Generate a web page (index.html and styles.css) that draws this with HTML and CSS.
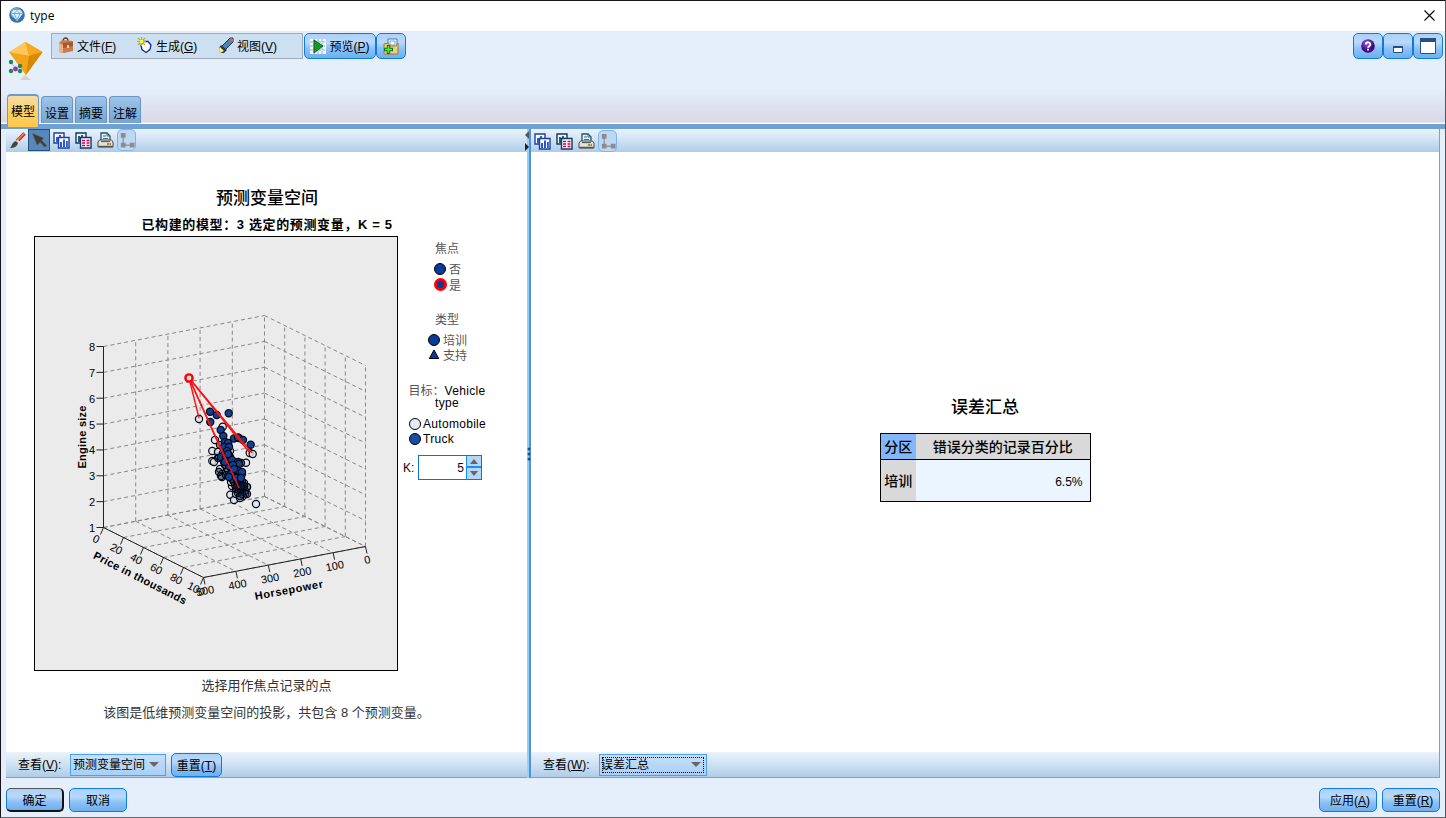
FILE: index.html
```html
<!DOCTYPE html>
<html lang="zh-CN">
<head>
<meta charset="utf-8">
<title>type</title>
<link rel="stylesheet" href="styles.css">
</head>
<body>
<svg class="defs" width="0" height="0" aria-hidden="true">
  <defs>
    <linearGradient id="gem" x1="0" x2="1"><stop offset="0" stop-color="#ffc94f"/><stop offset="1" stop-color="#e08c00"/></linearGradient>
    <radialGradient id="ball" cx=".4" cy=".3"><stop offset="0" stop-color="#9a5be0"/><stop offset="1" stop-color="#43067f"/></radialGradient>
    <symbol id="i-charts" viewBox="0 0 17 17">
      <path d="M1 1h10v10H1z" fill="#fff" stroke="#1c3f9f" stroke-width="1.4"/><path d="M3 5h2v5H3zM6 3h2v4H6z" fill="#2f5fd0"/>
      <path d="M5.500 5.500h10.500v10.500H5.500z" fill="#fff" stroke="#1c3f9f" stroke-width="1.400"/><path d="M7 10h2v5H7zM10 7.500h2V15h-2zM13 9h1.800v6H13z" fill="#2456cf"/>
    </symbol>
    <symbol id="i-table" viewBox="0 0 17 17">
      <path d="M1 1h10v10H1z" fill="#e7f7f3" stroke="#123769" stroke-width="1.400"/><path d="M3 4h2v6H3zM6 3h2v3H6z" fill="#23607d"/>
      <path d="M5.500 5.500h10.500v10.500H5.500z" fill="#fff" stroke="#123769" stroke-width="1.400"/><path d="M7 8.500h3m1.500 0h3M7 11h3m1.500 0h3M7 13.500h3m1.500 0h3" stroke="#d20045" stroke-width="1.300"/>
    </symbol>
    <symbol id="i-print" viewBox="0 0 17 17">
      <path d="M4 9V1h6l3 3v5z" fill="#dff4fb" stroke="#28515f" stroke-width="1.300"/><path d="M10 1v3h3M6 4h3M6 6.500h5" fill="none" stroke="#3c7384"/>
      <path d="M2.500 8h12l1.500 2v5H1v-5z" fill="#e8e2d4" stroke="#4f4c48"/><path d="M1.500 14.500h14" stroke="#555" stroke-width="1.500"/><path d="M4 9.500h9" stroke="#4b6770" stroke-width="1.300"/><path d="M10 12h2" stroke="#1fa03b" stroke-width="1.300"/><path d="M12.500 12h1.500" stroke="#e53324" stroke-width="1.300"/>
    </symbol>
    <symbol id="i-node" viewBox="0 0 18 18"><path d="M5.500 4v10h9" fill="none" stroke="#999" stroke-width="1.500"/><path d="M3 1h5v5H3zM3 11.500h5v5H3zM12.500 11.500h5v5h-5z" fill="#8c8c8c"/></symbol>
  </defs>
</svg>
<div class="window">
  <header class="titlebar">
    <svg class="app-icon" viewBox="0 0 16 16"><circle cx="8" cy="8" r="7.800" fill="#3373b4"/><circle cx="7" cy="6" r="5.500" fill="#69a5d9"/><path d="M4.500 3h7L14 6.500 8 14 2 6.500z" fill="#d9f1ff"/><path d="M2.500 6.500h11M5 6.500 8 13l3-6.500L8 3.500z" fill="none" stroke="#5a9ac9" stroke-width=".8"/></svg>
    <span class="window-title">type</span>
    <svg class="close" viewBox="0 0 11 11"><path d="M.5.500l10 10M10.500.500l-10 10" stroke="#000" stroke-width="1.100"/></svg>
  </header>

  <section class="head">
    <svg class="nugget" viewBox="0 0 36 42">
      <path d="M12 39l5-5 6 5z" fill="#d9d2c4"/>
      <path d="M1 11 17.500 1 34.500 11 18 34z" fill="url(#gem)"/><path d="M1 11 17.500 1 21 15z" fill="#ffc758"/><path d="M17.500 1 34.500 11 21 15z" fill="#f6a81f"/><path d="M1 11l20 4-3 19z" fill="#f2a51c"/><path d="M34.500 11 21 15l-3 19z" fill="#d98800"/>
      <path d="M3 21l5 7 5-3M3 30l5-2 5 3" stroke="#bbb" fill="none"/><g fill="#248752"><circle cx="3" cy="21" r="2.200"/><circle cx="12" cy="25" r="2.200"/><circle cx="3" cy="30" r="2.200"/><circle cx="12" cy="30" r="2.200"/></g><circle cx="7.500" cy="28" r="2.400" fill="#9136bd"/>
    </svg>
    <div class="toolrow">
      <nav class="menu">
        <span class="menu-item file"><svg viewBox="0 0 16 17"><path d="M5 4c0-4 5-4 5 0" fill="none" stroke="#6b3a25" stroke-width="1.300"/><path d="M1 6l3-3 11 1v10l-9 2-5-1z" fill="#c77b4d"/><path d="M1 6l4 2v8l-4-1z" fill="#e8b28c"/><path d="M5 6l10-1v4l-10 2z" fill="#a85530"/><path d="M9 8h2v3H9z" fill="#f3d0a2"/></svg><span>文件(<u>F</u>)</span></span>
        <span class="menu-item make"><svg viewBox="0 0 16 17"><path d="M6 4.500h5l3 3.500-1 4.500-4 3-4-3-1-4z" fill="#fff" stroke="#1b2b96" stroke-width="1.300"/><path d="M4.500 0v9M0 4.500h9M1 1l7 7M8 1 1 8" stroke="#b6b600" stroke-width="1.200"/><path d="M3 3h3v3H3z" fill="#ff3"/></svg><span>生成(<u>G</u>)</span></span>
        <span class="menu-item view"><svg viewBox="0 0 16 17"><path d="M15 1l-3 0-8 8 3 4 8-8z" fill="#4d81b8" stroke="#17355a"/><path d="M11 3l2-2 2 1v3z" fill="#d96849"/><path d="M3 8l6 5-3 3H2l-1-5z" fill="#29394d"/><path d="M2 10l4 4-4 2-1-4z" fill="#fff27a"/></svg><span>视图(<u>V</u>)</span></span>
      </nav>
      <button class="btn preview"><svg viewBox="0 0 16 17"><path d="M0 1h16v15H0z" fill="#f5faff"/><path d="M0 4h16M0 8h16M0 12h16M4 1v15M8 1v15M12 1v15" stroke="#8fa7d8" stroke-dasharray="3 1"/><path d="M4 2l9 6-9 7z" fill="#189a2b" stroke="#09651b"/></svg><span>预览(<u>P</u>)</span></button>
      <button class="btn add"><svg viewBox="0 0 16 17"><path d="M5 1h9v11H5z" fill="#fff" stroke="#3e78a5"/><path d="M7 3h5v4H7z" fill="none" stroke="#75a2cf"/><path d="M1 6l4-1 2 3h6l2-3v11H1z" fill="#edcf7b" stroke="#a5782c"/><path d="M5.500 7v9M1 11.500h9" stroke="#087d16" stroke-width="3.400"/><path d="M5.500 8v7M2 11.500h7" stroke="#65dc55" stroke-width="1.500"/></svg></button>
    </div>
    <div class="winbtns">
      <button class="btn"><svg viewBox="0 0 14 14"><circle cx="7" cy="7" r="6.800" fill="url(#ball)"/><path d="M4.800 5.500c0-3 4.700-2.800 4.500 0 0 1.700-2.200 1.600-2.200 3.200M7 9.800v1.700" fill="none" stroke="#fff" stroke-width="1.900"/></svg></button>
      <button class="btn"><svg viewBox="0 0 14 14"><path d="M2.500 7.500h9v6h-9z" fill="#fff" stroke="#284f82"/><path d="M2 7h10v2H2z" fill="#284f82"/></svg></button>
      <button class="btn max"><svg viewBox="0 0 16 16"><path d="M.5.500h15v15H.5z" fill="#fff" stroke="#284f82"/><path d="M0 0h16v4H0z" fill="#284f82"/></svg></button>
    </div>
    <div class="tabs"><span class="tab active">模型</span><span class="tab">设置</span><span class="tab">摘要</span><span class="tab">注解</span></div>
  </section>

  <main class="panes">
    <section class="pane left">
      <div class="bar tools">
        <span class="tool"><svg viewBox="0 0 17 17"><path d="M15.500 1.500 8 9" stroke="#a82b14" stroke-width="3.600"/><path d="M15 1.500 8 8.500" stroke="#ff7040" stroke-width="1.800"/><path d="M8.500 7.500l2 2-2 2-2-2z" fill="#ddd"/><path d="M7 9l2 2c-1 4-4 5-8 5 2-2 2-6 6-7z" fill="#464640"/></svg></span>
        <span class="tool pressed"><svg viewBox="0 0 17 17"><path d="M1 1l12 5-2 2.500 5 5-2 2-5-5-3 3z" fill="#3e3d3d" stroke="#777" stroke-width=".7"/></svg></span>
        <span class="tool"><svg><use href="#i-charts"/></svg></span>
        <span class="tool"><svg><use href="#i-table"/></svg></span>
        <span class="tool"><svg><use href="#i-print"/></svg></span>
        <span class="tool disabled"><svg><use href="#i-node"/></svg></span>
      </div>
      <div class="content">
        <h1 class="chart-title">预测变量空间</h1>
        <h2 class="chart-sub">已构建的模型：3 选定的预测变量，K = 5</h2>
        <div class="chart-row">
          <svg class="chart" id="chart" viewBox="35 237 362 433"></svg>
          <aside class="legend">
            <div class="lg-title t1">焦点</div>
            <div class="lg-row focus"><i class="dot"></i><span>否</span></div>
            <div class="lg-row focus yes"><i class="dot ring"></i><span>是</span></div>
            <div class="lg-title t2">类型</div>
            <div class="lg-row kind"><i class="dot"></i><span>培训</span></div>
            <div class="lg-row kind"><svg class="tri" viewBox="0 0 12 11"><path d="M6 1l4.700 8.500H1.300z" fill="#063b98" stroke="#000"/></svg><span>支持</span></div>
            <div class="lg-title t3">目标：<b>Vehicle</b><br><b>type</b></div>
            <div class="lg-row target"><i class="dot pale"></i>Automobile</div>
            <div class="lg-row target"><i class="dot mid"></i>Truck</div>
            <div class="k-row"><span>K:</span><div class="spin"><span class="val">5</span><span class="arrows"><i class="up"></i><i class="down"></i></span></div></div>
          </aside>
        </div>
        <p class="note n1">选择用作焦点记录的点</p>
        <p class="note n2">该图是低维预测变量空间的投影，共包含 8 个预测变量。</p>
      </div>
      <div class="bar viewbar"><label>查看(<u>V</u>):</label><span class="combo"><em>预测变量空间</em><i></i></span><button class="btn reset"><span>重置(<u>T</u>)</span></button></div>
    </section>
    <div class="divider"><svg class="collapse" viewBox="0 0 4 22"><path d="M4 1v8L0 5z" fill="#555"/><path d="M0 13v8l4-4z" fill="#222"/></svg><svg class="grip" viewBox="0 0 4 14"><g fill="#174e9c"><circle cx="2" cy="2" r="1.500"/><circle cx="2" cy="7" r="1.500"/><circle cx="2" cy="12" r="1.500"/></g></svg></div>
    <section class="pane right">
      <div class="bar tools">
        <span class="tool"><svg><use href="#i-charts"/></svg></span>
        <span class="tool"><svg><use href="#i-table"/></svg></span>
        <span class="tool"><svg><use href="#i-print"/></svg></span>
        <span class="tool disabled"><svg><use href="#i-node"/></svg></span>
      </div>
      <div class="content">
        <h1 class="error-title">误差汇总</h1>
        <table class="errors">
          <tr><th class="part">分区</th><th class="wide">错误分类的记录百分比</th></tr>
          <tr><th class="rowhead">培训</th><td>6.5%</td></tr>
        </table>
      </div>
      <div class="bar viewbar"><label>查看(<u>W</u>):</label><span class="combo focused"><em>误差汇总</em><i></i></span></div>
    </section>
  </main>

  <footer class="footer">
    <button class="btn ok"><span>确定</span></button><button class="btn"><span>取消</span></button>
    <span class="spacer"></span>
    <button class="btn key"><span>应用(<u>A</u>)</span></button><button class="btn key"><span>重置(<u>R</u>)</span></button>
  </footer>
</div>
<script src="chart.js"></script>
</body>
</html>
```
FILE: styles.css
```css
* { box-sizing: border-box; }
body { margin: 0; width: 1446px; height: 818px; overflow: hidden; font: 12px/16px "Liberation Sans", "Noto Sans CJK SC", sans-serif; color: #000; }
.defs { position: absolute; }
h1, h2, p { margin: 0; }
u { text-decoration: underline; text-underline-offset: 1px; }
.window { width: 1446px; height: 818px; border: 1px solid #161419; border-right-color: #55565a; border-bottom-color: #66676b; display: flex; flex-direction: column; background: #e4effb; }
.titlebar { height: 30px; background: #fff; display: flex; align-items: center; padding: 0 10px 2px 8px; }
.app-icon { width: 16px; height: 16px; }
.window-title { font: 12px/16px "Open Sans", sans-serif; margin-left: 5px; padding-top: 1px; flex: 1; }
.close { width: 11px; height: 11px; }

.head { height: 93px; display: grid; grid-template-columns: 50px 1fr 90px; grid-template-rows: 62px 31px; padding-right: 2px; background: linear-gradient(#e4effb 0, #e4effb 62%, #dad8e6 98%, #fff 99%); }
.nugget { width: 36px; height: 42px; margin: 10px 0 0 7px; }
.toolrow { display: flex; padding-top: 2px; }
.menu { width: 252px; height: 26px; border: 1px solid #9fabb9; background: #cde0f2; display: flex; align-items: center; padding-left: 6px; }
.menu-item { display: flex; align-items: center; }
.menu-item svg { width: 16px; height: 17px; margin-right: 3px; margin-bottom: 1px; }
.menu-item span, .btn span { padding-top: 2px; }
.menu-item.file { width: 79px; }
.menu-item.make { width: 81px; }
.btn { font: inherit; color: inherit; display: flex; align-items: center; justify-content: center; padding: 0; border: 1px solid #0d7cdd; border-radius: 5px; background: linear-gradient(#abd0f8, #b9d9fb 35%, #8ec2f6 60%, #6cafee); }
.preview { width: 72px; height: 26px; margin-left: 1px; }
.preview svg { width: 16px; height: 17px; margin-right: 3px; }
.add { width: 30px; height: 26px; }
.add svg { width: 16px; height: 17px; }
.winbtns { display: flex; padding-top: 2px; }
.winbtns .btn { width: 30px; height: 26px; }
.winbtns svg { width: 14px; height: 14px; }
.winbtns .max svg { width: 16px; height: 16px; }
.tabs { grid-column: 1 / 4; display: flex; align-items: flex-start; gap: 2px; padding-left: 6px; }
.tab { width: 32px; height: 27px; margin-top: 3px; border: 1px solid #6996c8; border-bottom: 0; border-radius: 4px 4px 0 0; background: linear-gradient(#9fc4e8, #75a4d4); line-height: 35px; text-align: center; }
.tab.active { height: 33px; margin-top: 1px; border-top-width: 2px; border-color: #6b9bcd; background: linear-gradient(#f6dda5, #ffd066 50%, #ffc64b); position: relative; line-height: 32px; }

.panes { height: 654px; border-top: 5px solid #70a1d2; display: flex; padding: 0 5px; }
.pane { display: flex; flex-direction: column; border-bottom: 1px solid #75a4d2; }
.left { width: 521px; }
.right { width: 909px; border-right: 1px solid #75a4d2; }
.content { background: #fff; flex: 1; }
.bar { background: linear-gradient(#eaf3fc, #cfe1f3 50%, #afcce7); display: flex; flex: none; }
.tools { height: 23px; }
.tool { width: 22px; height: 22px; display: flex; align-items: center; justify-content: center; }
.tool svg { width: 17px; height: 17px; }
.right .tools { padding-top: 1px; }
.pressed { background: #5688bd; border: 1px solid #254f81; }
.disabled { width: 19px; border: 1px solid #7fb5ed; border-radius: 5px; background: #bcd8f3; margin-left: 1px; }
.divider { width: 4px; background: linear-gradient(90deg, #8fd1ff 0 2px, #5a91cd 2px); position: relative; }
.collapse { position: absolute; left: -2px; top: 1px; width: 4px; height: 22px; }
.grip { position: absolute; left: 0; top: 318px; width: 4px; height: 14px; }

.chart-title { font-size: 17px; font-weight: 500; line-height: 24px; padding-top: 35px; text-align: center; }
.chart-sub { font-size: 13px; font-weight: 700; line-height: 18px; padding-top: 5px; height: 25px; text-align: center; letter-spacing: .63px; }
.chart-row { display: flex; padding-left: 28px; }
.chart { width: 364px; height: 435px; background: #ebebeb; border: 1px solid #000; font-family: "Liberation Sans", sans-serif; font-size: 11px; }
.chart-title, .chart-sub { padding-left: 1px; }
.grid { fill: none; stroke: #888; stroke-width: 1; stroke-dasharray: 4 3; }
.axis { fill: none; stroke: #222; stroke-width: 1; }
.axis-title { font-weight: bold; }
.point { stroke: #05080f; stroke-width: 1.2; }
.truck { fill: #123f95; }
.auto { fill: #dce5f2; fill-opacity: .8; }
.hollow { fill: #0b1f4b; fill-opacity: .45; }
.link { stroke: #fb1217; stroke-width: 1.4; }
.focal { fill: #ddd; stroke: #fb0007; stroke-width: 2.4; }

.legend { width: 98px; color: #555; }
.lg-title { text-align: center; font-size: 12px; }
.lg-title b { font-weight: 400; color: #000; letter-spacing: .3px; }
.t1 { height: 25px; padding-top: 5px; }
.t2 { padding-top: 20px; height: 40px; }
.t3 { line-height: 12px; padding-top: 23px; height: 54px; }
.lg-row { display: flex; align-items: center; height: 15px; }
.lg-row span { padding-top: 3px; }
.yes { height: 16px; }
.focus { padding-left: 36px; }
.kind { padding-left: 30px; }
.target { padding-left: 11px; color: #000; letter-spacing: .3px; }
.dot { width: 12px; height: 12px; border: 1px solid #000; border-radius: 50%; background: #063b98; margin-right: 3px; flex: none; }
.ring { width: 13px; height: 13px; border: 3px solid #fb0007; margin-right: 2px; }
.target .dot { margin-right: 2px; }
.pale { background: #e6ebf6; }
.mid { background: #194da2; }
.tri { width: 12px; height: 11px; margin-right: 3px; }
.k-row { display: flex; align-items: center; padding: 9px 0 0 5px; color: #200; }
.k-row > span { width: 15px; }
.spin { width: 64px; height: 25px; border: 1px solid #0875d1; background: #fff; display: flex; }
.val { flex: 1; text-align: right; padding-right: 2px; line-height: 25px; }
.arrows { width: 15px; border-left: 1px solid #168ffa; background: linear-gradient(#b5d6f6 0 10px, #168ffa 10px 12px, #b5d6f6 12px); display: flex; flex-direction: column; align-items: center; justify-content: space-between; padding: 3px 0; }
.up { border: 4px solid transparent; border-top: 0; border-bottom: 5px solid #666; }
.down { border: 4px solid transparent; border-bottom: 0; border-top: 5px solid #666; }
.note { text-align: center; font-size: 13px; line-height: 16px; color: #333; }
.n1 { padding-top: 7px; }
.n2 { padding-top: 11px; }

.viewbar { height: 25px; align-items: center; padding-left: 12px; }
.viewbar label { width: 52px; padding-top: 1px; }
.combo { width: 96px; height: 22px; border: 1px solid #4aa0ed; background: linear-gradient(#c8dff8, #a8cff7); display: flex; align-items: center; justify-content: space-between; padding: 0 6px 0 2px; }
.combo em { font-style: normal; padding-top: 1px; }
.combo i { border: 5px solid transparent; border-bottom: 0; border-top: 5px solid #666; }
.reset { width: 51px; height: 24px; margin-left: 5px; }
.right .viewbar label { width: 56px; }
.focused { width: 108px; padding: 0 5px 0 1px; outline: 1px dotted #000; outline-offset: -4px; }
.right .content { display: flex; flex-direction: column; align-items: center; }
.error-title { font-size: 17px; font-weight: 500; line-height: 24px; padding-top: 244px; }
.errors { border-collapse: collapse; width: 211px; margin-top: 13px; border: 1px solid #000; font-size: 14px; }
.errors tr:first-child { height: 26px; border-bottom: 1px solid #000; }
.errors tr + tr { height: 42px; }
.errors th, .errors td { padding: 0; font-weight: 500; }
.errors th { background: #d9d9d9; padding-top: 1px; }
.errors .part { background: #82b7fb; width: 36px; }
.errors td { background: #eaf5ff; text-align: right; font-size: 12px; font-weight: 400; padding: 2px 7px 0 0; }

.footer { height: 39px; padding: 10px 5px 0; display: flex; gap: 5px; }
.footer .btn { width: 58px; height: 24px; }
.footer .key { padding-left: 4px; }
.footer .ok { border-color: #555 #111 #111 #1477c9; border-bottom-width: 2px; border-right-width: 2px; }
.spacer { flex: 1; }
```
FILE: chart.js
```js
const chart = document.getElementById("chart");
const make = (tag, attrs, text) => {
  const el = document.createElementNS("http://www.w3.org/2000/svg", tag);
  for (const key in attrs) el.setAttribute(key, attrs[key]);
  if (text !== undefined) el.textContent = text;
  chart.appendChild(el);
};
const line = (cls, x1, y1, x2, y2) => make("line", { class: cls, x1, y1, x2, y2 });

// Corners of the projected cube
const L = [103.5, 527.5], B = [264.5, 496.5], R = [365.5, 546.5], F = [203.5, 577.5], H = 181;
const mix = (a, b, t) => [a[0] + (b[0] - a[0]) * t, a[1] + (b[1] - a[1]) * t];

for (let i = 0; i <= 7; i++) {
  const d = H * i / 7;
  line("grid", L[0], L[1] - d, B[0], B[1] - d);
  line("grid", B[0], B[1] - d, R[0], R[1] - d);
  line("axis", L[0] - 7, L[1] - d, L[0], L[1] - d);
  make("text", { x: 95, y: L[1] - d + 4.5, "text-anchor": "end" }, i + 1);
}
for (let i = 0; i <= 5; i++) {
  const a = mix(L, B, i / 5), b = mix(B, R, i / 5), f = mix(F, R, i / 5), g = mix(L, F, i / 5);
  if (i) line("grid", a[0], a[1], a[0], a[1] - H);
  if (i) line("grid", b[0], b[1], b[0], b[1] - H);
  line("grid", a[0], a[1], f[0], f[1]);
  // Depth lines run parallel to the horsepower axis
  line("grid", g[0], g[1], b[0], b[1]);
  line("axis", g[0], g[1], g[0] - 3, g[1] + 7);
  line("axis", f[0], f[1], f[0] + 1.5, f[1] + 7);
  const p = [g[0] - 8, g[1] + 13], q = [f[0] + 2, f[1] + 15];
  make("text", { x: p[0], y: p[1] + 2, "text-anchor": "middle", transform: `rotate(27 ${p})` }, i * 20);
  make("text", { x: q[0], y: q[1] + 2, "text-anchor": "middle", transform: `rotate(-11 ${q})` }, 500 - i * 100);
}
line("axis", ...L, L[0], L[1] - H);
line("axis", ...L, ...F);
line("axis", ...F, ...R);
make("text", { class: "axis-title", x: 0, y: 0, "text-anchor": "middle", textLength: 63, transform: "translate(85.500 437) rotate(-90)" }, "Engine size");
make("text", { class: "axis-title", x: 0, y: 0, textLength: 103, transform: "translate(92.500 558) rotate(27)" }, "Price in thousands");
make("text", { class: "axis-title", x: 0, y: 0, textLength: 69, transform: "translate(255.500 600) rotate(-10.500)" }, "Horsepower");

const points = {
  auto: [[199,419],[222.7,426.7],[215,440],[212.3,451],[212.3,461],[214,462],[239,438],[249.7,453],[252.7,454],[246,462.7],[230.3,494.7],[234,500],[256,504],[219,456],[220,469],[222,474],[221,476],[218,452],[230,451],[247,487],[245,494],[243,496],[232,486],[231,482],[236,494],[240,498]],
  hollow: [[220,445],[223,453],[229,455],[218,458],[224,462],[219,472],[225,465],[228,470],[222,477],[233,463],[236,467],[241,463],[238,474],[242,474],[226,475],[232,479],[234,482],[238,482],[240,484],[244,483],[235,485],[239,487],[243,488],[247,487],[236,489],[241,490],[245,491],[238,493],[242,494],[247,494],[239,490],[237,486],[242,482],[240,496],[244,486],[234,476],[237,480],[228,461],[231,468],[234,472],[230,457],[225,453],[240,480],[239,477],[241,486]],
  truck: [[210,411.7],[216.7,415],[228.7,413.3],[210.3,422],[220.7,430],[223.3,436],[234,438.5],[238,437.5],[243,440],[250.7,444.7],[225,442],[228,443],[224,447],[229,447],[227,451],[221,457],[226,458],[232,460],[238,462],[239,464],[229,466],[237,470],[242,472],[231,474],[229,477],[236,478],[241,478],[228,454],[233,465],[234,469],[225,462]]
};
for (const [cls, list] of Object.entries(points))
  for (const [cx, cy] of list) make("circle", { class: "point " + cls, cx, cy, r: 3.6 });
const focus = [189, 378];
for (const end of [[199, 418], [227, 463], [239, 488], [252, 453], [249, 452]]) line("link", ...focus, ...end);
make("circle", { class: "focal", cx: focus[0], cy: focus[1], r: 3.6 });
```
